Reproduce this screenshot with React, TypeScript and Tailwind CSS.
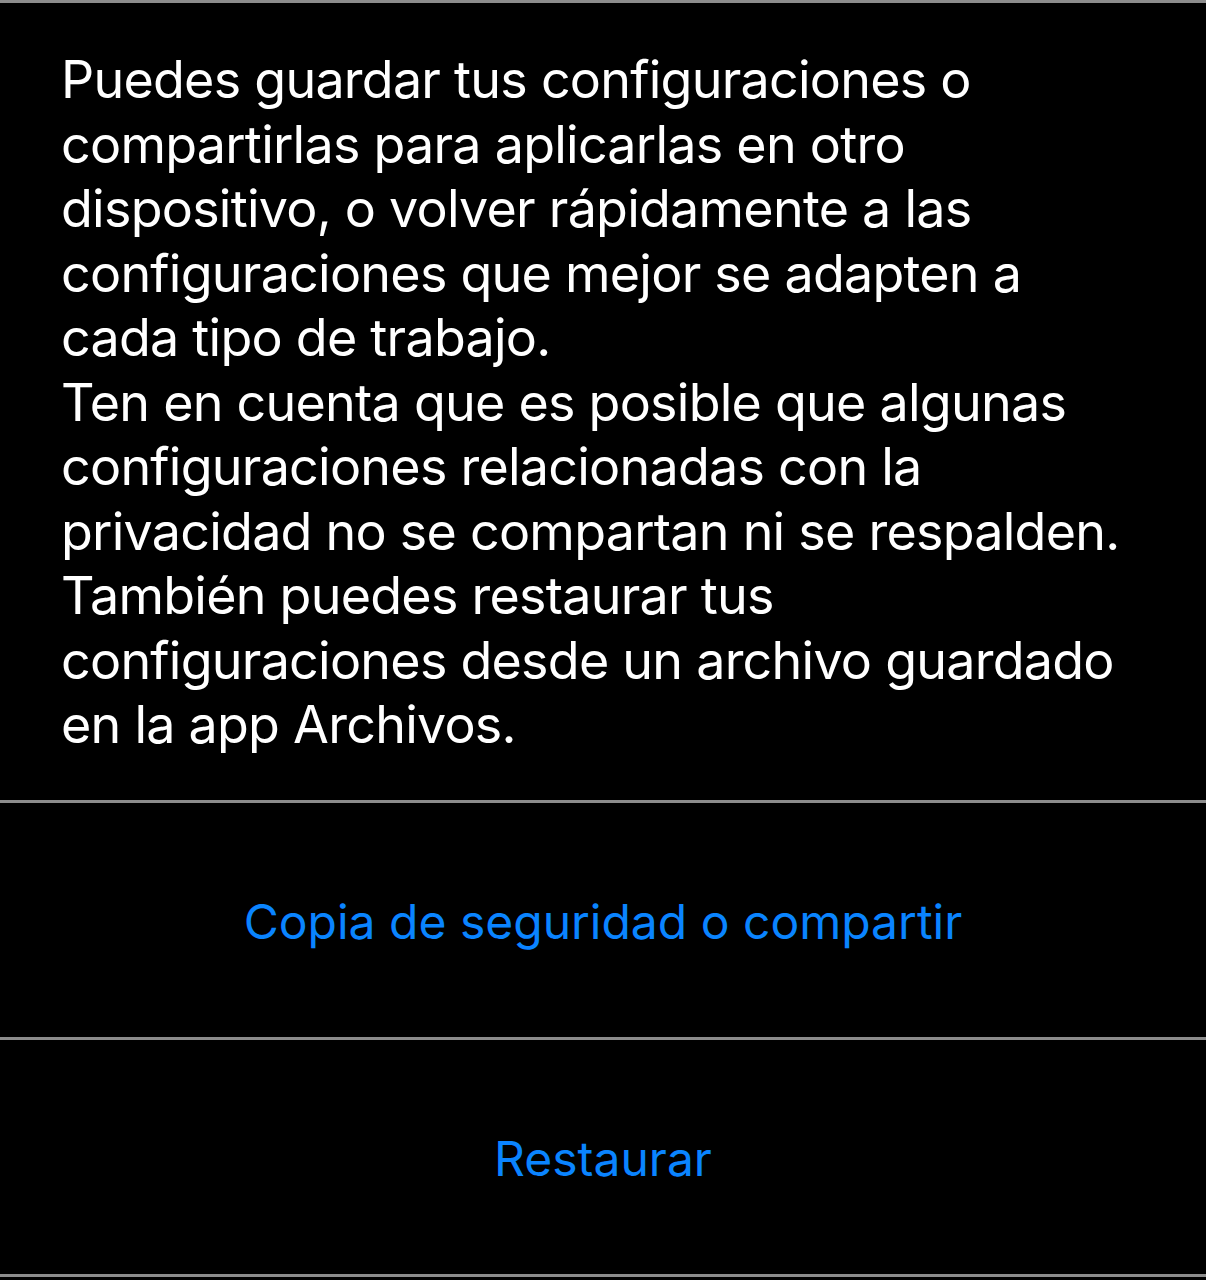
const lines = [
  'Puedes guardar tus configuraciones o',
  'compartirlas para aplicarlas en otro',
  'dispositivo, o volver rápidamente a las',
  'configuraciones que mejor se adapten a',
  'cada tipo de trabajo.',
  'Ten en cuenta que es posible que algunas',
  'configuraciones relacionadas con la',
  'privacidad no se compartan ni se respalden.',
  'También puedes restaurar tus',
  'configuraciones desde un archivo guardado',
  'en la app Archivos.',
];

function ActionRow({ label }: { label: string }) {
  return (
    <button className="flex h-[237px] w-full items-center justify-center border-b-[3px] border-[#8c8c8c] pt-[4px] text-[48px] text-[#0a84ff]">
      {label}
    </button>
  );
}

export default function App() {
  return (
    <div className="min-h-[1280px] w-full bg-black font-['Inter','Liberation_Sans',sans-serif] text-white">
      <div className="border-y-[3px] border-[#8c8c8c] pl-[61px] pr-6 pt-[45px] pb-[42px]">
        <p className="text-[52px] leading-[64.5px] tracking-[-0.75px]">
          {lines.map((line) => (
            <span key={line} className="block whitespace-nowrap">
              {line}
            </span>
          ))}
        </p>
      </div>
      <ActionRow label="Copia de seguridad o compartir" />
      <ActionRow label="Restaurar" />
    </div>
  );
}
